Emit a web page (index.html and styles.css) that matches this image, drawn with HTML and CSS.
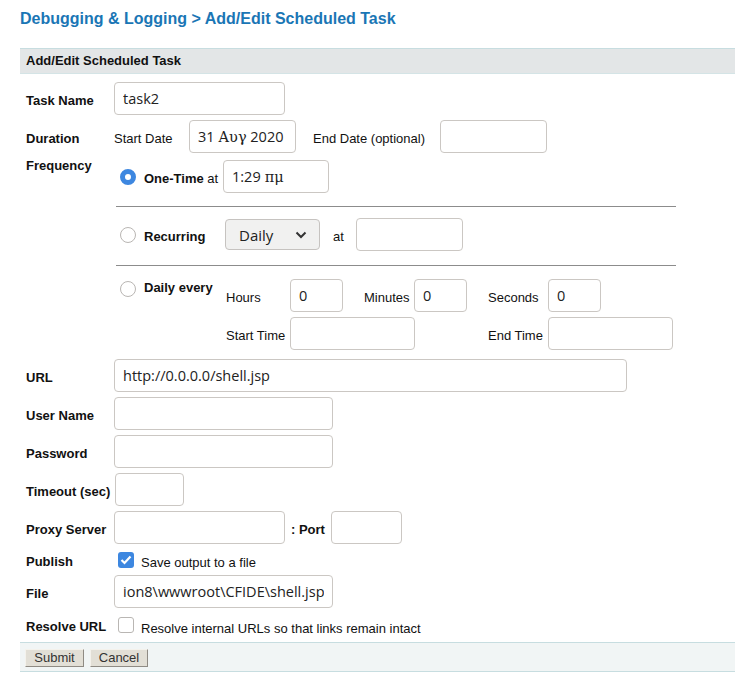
FILE: index.html
```html
<!DOCTYPE html>
<html>
<head>
<meta charset="utf-8">
<title>Add/Edit Scheduled Task</title>
<link rel="stylesheet" href="styles.css">
</head>
<body>
<h1 class="title">Debugging &amp; Logging &gt; Add/Edit Scheduled Task</h1>
<div class="bar">Add/Edit Scheduled Task</div>
<form class="form">
  <div class="row first">
    <label class="lbl">Task Name</label>
    <input class="inp w171" type="text" value="task2">
  </div>
  <div class="row">
    <label class="lbl">Duration</label>
    <span class="txt w75">Start Date</span>
    <span class="inp field w107">31 <span class="greek">Αυγ</span>&nbsp;2020</span>
    <span class="txt w127 ml17">End Date (optional)</span>
    <input class="inp w107" type="text" value="">
  </div>
  <div class="row freq">
    <label class="lbl">Frequency</label>
    <div class="freq-body">
      <div class="opt one">
        <span class="radio on"></span>
        <span class="opt-txt w79"><b>One-Time</b> at</span>
        <span class="inp field w106">1:29 <span class="greek">πμ</span></span>
      </div>
      <div class="sep"></div>
      <div class="opt rec">
        <span class="radio"></span>
        <span class="opt-txt w81"><b>Recurring</b></span>
        <span class="sel-wrap">
          <select class="sel"><option>Daily</option></select>
          <svg class="chev" width="12" height="8" viewBox="0 0 12 8"><path d="M1.5 1.5 L6 6 L10.5 1.5" fill="none" stroke="#333" stroke-width="2"/></svg>
        </span>
        <span class="txt w23 ml13">at</span>
        <input class="inp w107" type="text" value="">
      </div>
      <div class="sep sep2"></div>
      <div class="opt daily">
        <div class="daily-left">
          <span class="radio dr"></span>
          <span class="opt-txt"><b>Daily every</b></span>
        </div>
        <div class="dgrid">
          <span class="txt">Hours</span>
          <input class="inp w53" type="text" value="0">
          <span class="txt">Minutes</span>
          <input class="inp w53" type="text" value="0">
          <span class="txt">Seconds</span>
          <input class="inp w53" type="text" value="0">
          <span class="txt">Start Time</span>
          <input class="inp w125 span2" type="text" value="">
          <span class="txt c5">End Time</span>
          <input class="inp w125" type="text" value="">
        </div>
      </div>
    </div>
  </div>
  <div class="row r-url">
    <label class="lbl">URL</label>
    <input class="inp w513" type="text" value="http://0.0.0.0/shell.jsp">
  </div>
  <div class="row">
    <label class="lbl">User Name</label>
    <input class="inp w219" type="text" value="">
  </div>
  <div class="row">
    <label class="lbl">Password</label>
    <input class="inp w219" type="password" value="">
  </div>
  <div class="row">
    <label class="lbl">Timeout (sec)</label>
    <input class="inp w69 ml1" type="text" value="">
  </div>
  <div class="row">
    <label class="lbl">Proxy Server</label>
    <input class="inp w171" type="text" value="">
    <b class="port">: Port</b>
    <input class="inp w71" type="text" value="">
  </div>
  <div class="row r-pub">
    <label class="lbl">Publish</label>
    <span class="check on"><svg width="12" height="10" viewBox="0 0 12 10"><path d="M1.5 5 L4.5 8 L10.5 1.5" fill="none" stroke="#fff" stroke-width="2.2"/></svg></span>
    <span class="ctxt">Save output to a file</span>
  </div>
  <div class="row">
    <label class="lbl">File</label>
    <input class="inp w219" type="text" value="ion8\wwwroot\CFIDE\shell.jsp">
  </div>
  <div class="row r-res">
    <label class="lbl">Resolve URL</label>
    <span class="check"></span>
    <span class="ctxt">Resolve internal URLs so that links remain intact</span>
  </div>
</form>
<div class="foot">
  <button class="btn w59" type="button">Submit</button>
  <button class="btn w58" type="button">Cancel</button>
</div>
</body>
</html>
```
FILE: styles.css
```css
html, body {
  margin: 0;
  padding: 0;
  background: #fff;
}
body {
  font-family: "Liberation Sans", Arial, sans-serif;
  font-size: 13px;
  color: #111;
  width: 735px;
  overflow: hidden;
}
.title {
  margin: 9px 0 0 20px;
  font-size: 16px;
  font-weight: bold;
  color: #1a76b5;
  line-height: 19px;
}
.bar {
  margin: 20px 0 0 20px;
  height: 24px;
  line-height: 24px;
  border-top: 1px solid #c7dde0;
  border-bottom: 1px solid #d4e4e6;
  background: #e3e6e7;
  font-weight: bold;
  padding-left: 6px;
  color: #111;
}
.form {
  margin: 0 0 0 26px;
  display: flex;
  flex-direction: column;
  gap: 5px;
}
.row {
  display: flex;
  align-items: center;
  min-height: 33px;
}
.row.first { margin-top: 8px; }
.lbl {
  width: 88px;
  flex-shrink: 0;
  font-weight: bold;
  white-space: nowrap;
  padding-top: 3px;
}
.txt { white-space: nowrap; flex-shrink: 0; padding-top: 3px; }
.inp {
  box-sizing: border-box;
  height: 33px;
  border: 1px solid #cbc7c3;
  border-radius: 4px;
  padding: 0 8px;
  font-family: "Open Sans", "Noto Sans", sans-serif;
  font-size: 14.5px;
  color: #222;
  background: #fff;
  flex-shrink: 0;
  outline: none;
  margin: 0;
}
.field {
  display: inline-flex;
  align-items: center;
  white-space: nowrap;
}
.greek {
  font-family: "DejaVu Serif", serif;
  font-size: 14.5px;
  margin-left: 4px;
}
.w53 { width: 53px; }
.w69 { width: 69px; }
.w71 { width: 71px; }
.w75 { width: 75px; }
.w79 { width: 79px; }
.w81 { width: 81px; }
.w23 { width: 23px; }
.w106 { width: 106px; }
.w107 { width: 107px; }
.w125 { width: 125px; }
.w127 { width: 127px; }
.w171 { width: 171px; }
.w219 { width: 219px; }
.w513 { width: 513px; }
.ml1 { margin-left: 1px; }
.ml13 { margin-left: 13px; }
.ml17 { margin-left: 17px; }

.row.freq { align-items: flex-start; }
.row.freq .lbl { line-height: 15px; padding-top: 0; }
.freq-body {
  display: flex;
  flex-direction: column;
  padding-top: 2px;
}
.opt {
  display: flex;
  align-items: center;
  height: 33px;
}
.opt.daily {
  align-items: flex-start;
  height: auto;
}
.opt-txt { white-space: nowrap; flex-shrink: 0; padding-top: 3px; }
.radio {
  box-sizing: border-box;
  width: 16px;
  height: 16px;
  border-radius: 50%;
  border: 1px solid #b9b6b3;
  background: #fff;
  margin: 0 8px 0 6px;
  flex-shrink: 0;
}
.radio.on { border: 5px solid #3d87e0; }
.sep {
  width: 560px;
  height: 1px;
  background: #8c8c8c;
  margin: 13px 0 0 2px;
}
.sep.sep2 { margin-top: 14px; }
.opt.rec { margin-top: 11px; }
.opt.daily { margin-top: 13px; }
.daily-left {
  display: flex;
  align-items: flex-start;
  width: 112px;
  flex-shrink: 0;
  padding-top: 1px;
}
.radio.dr { margin-top: 1px; }
.daily-left .opt-txt { line-height: 15px; padding-top: 0; }
.dgrid {
  display: grid;
  grid-template-columns: 64px 74px 50px 74px 60px auto;
  grid-template-rows: 33px 33px;
  row-gap: 5px;
  align-items: center;
}
.dgrid .span2 { grid-column: 2 / span 2; }
.dgrid .c5 { grid-column: 5; }
.sel-wrap {
  position: relative;
  display: inline-block;
  flex-shrink: 0;
  height: 31px;
}
.sel {
  appearance: none;
  -webkit-appearance: none;
  box-sizing: border-box;
  width: 95px;
  height: 31px;
  border: 1px solid #c6c3c0;
  border-radius: 4px;
  background: #f1f1f0;
  font-family: "Open Sans", "Noto Sans", sans-serif;
  font-size: 15px;
  color: #222;
  padding: 0 0 0 13px;
  margin: 0;
}
.chev {
  position: absolute;
  right: 13px;
  top: 12px;
  pointer-events: none;
}
.r-url { margin-top: 4px; }
.port {
  margin: 0 6px 0 6px;
  padding-top: 3px;
  white-space: nowrap;
}
.r-pub { min-height: 21px; }
.r-res { min-height: 24px; }
.check {
  box-sizing: border-box;
  width: 16px;
  height: 16px;
  border-radius: 3px;
  border: 1px solid #b9b6b3;
  background: #fff;
  margin: 0 7px 0 4px;
  flex-shrink: 0;
  display: flex;
  align-items: center;
  justify-content: center;
}
.check.on {
  border: none;
  background: #3d87e0;
}
.ctxt { padding-top: 6px; white-space: nowrap; }
.foot {
  margin: 5px 0 0 20px;
  height: 22px;
  border-top: 1px solid #c7dde0;
  border-bottom: 1px solid #c7dde0;
  background: #f1f5f5;
  display: flex;
  align-items: flex-start;
  gap: 6px;
  padding: 6px 0 0 5px;
}
.btn {
  box-sizing: border-box;
  height: 18px;
  border: 1px solid;
  border-color: #f4f2ec #8f8b84 #8f8b84 #f4f2ec;
  background: #e2dfd6;
  font-family: "Liberation Sans", Arial, sans-serif;
  font-size: 13px;
  color: #333;
  padding: 0;
  margin: 0;
  line-height: 16px;
}
.w59 { width: 59px; }
.w58 { width: 58px; }
```
